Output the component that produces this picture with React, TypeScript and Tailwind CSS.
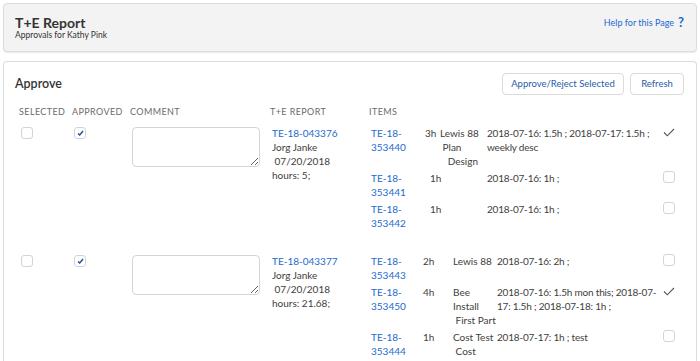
import React from 'react';

type Item = {
  id: string;
  hours: string;
  hoursPad?: boolean;
  desc: string[];
  detail: string;
  done: boolean;
};

type Cols = { id: string; hours: string; desc: string; detail: string };

type Report = {
  no: string;
  owner: string;
  date: string;
  total: string;
  cols: Cols;
  items: Item[];
};

const reports: Report[] = [
  {
    no: 'TE-18-043376',
    owner: 'Jorg Janke',
    date: '\u00a007/20/2018',
    total: 'hours: 5;',
    cols: { id: 'w-[54px]', hours: 'w-[15px]', desc: 'w-[47px]', detail: 'w-[176px]' },
    items: [
      {
        id: 'TE-18-353440',
        hours: '3h',
        desc: ['Lewis 88', '\u00a0Plan', '\u00a0\u00a0\u00a0Design'],
        detail: '2018-07-16: 1.5h ; 2018-07-17: 1.5h ; weekly desc',
        done: true,
      },
      { id: 'TE-18-353441', hours: '1h', hoursPad: true, desc: [], detail: '2018-07-16: 1h ;', done: false },
      { id: 'TE-18-353442', hours: '1h', hoursPad: true, desc: [], detail: '2018-07-16: 1h ;', done: false },
    ],
  },
  {
    no: 'TE-18-043377',
    owner: 'Jorg Janke',
    date: '\u00a007/20/2018',
    total: 'hours: 21.68;',
    cols: { id: 'w-[52px]', hours: 'w-[30px]', desc: 'w-[44px]', detail: 'w-[166px]' },
    items: [
      { id: 'TE-18-353443', hours: '2h', desc: ['Lewis 88'], detail: '2018-07-16: 2h ;', done: false },
      {
        id: 'TE-18-353450',
        hours: '4h',
        desc: ['Bee', 'Install', '\u00a0First Part'],
        detail: '2018-07-16: 1.5h mon this; 2018-07-17: 1.5h ; 2018-07-18: 1h ;',
        done: true,
      },
      {
        id: 'TE-18-353444',
        hours: '1h',
        desc: ['Cost Test', '\u00a0Cost', 'Update'],
        detail: '2018-07-17: 1h ; test',
        done: false,
      },
    ],
  },
];

const Box = ({ checked }: { checked?: boolean }) => (
  <span className="flex h-[12px] w-[12px] items-center justify-center rounded-[3px] border border-[#d4d4d4] bg-white">
    {checked && (
      <svg width="7" height="6" viewBox="0 0 7 6">
        <path d="M1 3.4 L2.7 5 L6 1" fill="none" stroke="#1f4ea6" strokeWidth="1.4" />
      </svg>
    )}
  </span>
);

const Tick = () => (
  <svg width="12" height="9" viewBox="0 0 12 9" className="mt-[2px]">
    <path d="M1 4.5 L4.3 7.8 L11 1" fill="none" stroke="#555" strokeWidth="1.1" />
  </svg>
);

const ItemRow = ({ item, cols }: { item: Item; cols: Cols }) => (
  <div className="flex items-start pb-[3px]">
    <div className={`${cols.id} shrink-0 pr-[6px] text-[#1b6ad1]`}>
      {item.id.slice(0, 6)}
      <br />
      {item.id.slice(6)}
    </div>
    <div className={`${cols.hours} shrink-0 ${item.hoursPad ? 'pl-[5px]' : ''}`}>{item.hours}</div>
    <div className={`${cols.desc} shrink-0 whitespace-nowrap`}>
      {item.desc.map((d) => (
        <div key={d}>{d}</div>
      ))}
    </div>
    <div className={`${cols.detail} shrink-0 tracking-[-0.2px]`}>{item.detail}</div>
    <div className="w-[16px] shrink-0">{item.done ? <Tick /> : <Box />}</div>
  </div>
);

export default function App() {
  return (
    <div className="min-h-screen bg-white p-[3px] font-['Lato',sans-serif] text-[#3e3e3c]">
      {/* page header */}
      <div className="flex h-[49px] items-start justify-between rounded-[4px] border border-[#dcdcdc] bg-[#f3f3f3] px-[11px] pt-[11px] shadow-[0_1px_1px_rgba(0,0,0,0.08)]">
        <div>
          <h1 className="text-[14px] font-bold leading-[16px] text-[#333]">T+E Report</h1>
          <p className="mt-[-1px] text-[8.5px] leading-[10px] text-[#333]">Approvals for Kathy Pink</p>
        </div>
        <a className="mr-[1px] flex items-center gap-[4px] pt-[1px] text-[9px] text-[#1b6ad1]">
          Help for this Page
          <span className="text-[13px] font-bold leading-[13px]">?</span>
        </a>
      </div>

      {/* approvals card */}
      <div className="mt-[9px] rounded-t-[4px] border border-b-0 border-[#dcdcdc] bg-white pt-[11px] text-[10px] leading-[14px]">
        <div className="flex h-[22px] items-center justify-between px-[11px]">
          <h2 className="text-[12.5px] font-semibold text-[#333]">Approve</h2>
          <div className="mr-[1px] flex gap-[6px]">
            <button className="h-[22px] w-[122px] rounded-[4px] border border-[#dddbda] bg-white text-[9.5px] text-[#2a5cab]">
              Approve/Reject Selected
            </button>
            <button className="h-[22px] w-[54px] rounded-[4px] border border-[#dddbda] bg-white text-[9.5px] text-[#2a5cab]">
              Refresh
            </button>
          </div>
        </div>

        <div className="mt-[10px] px-[15px]">
          <div className="flex text-[9px] uppercase tracking-[0.4px] text-[#6b6b6b]">
            <div className="w-[53px]">Selected</div>
            <div className="w-[58px]">Approved</div>
            <div className="w-[140px]">Comment</div>
            <div className="w-[99px]">T+E Report</div>
            <div>Items</div>
          </div>

          <div className="mt-[7px]">
            {reports.map((r) => (
              <div key={r.no} className="flex items-start pb-[21px]">
                <div className="w-[53px] pl-[2px] pt-[1px]">
                  <Box />
                </div>
                <div className="w-[58px] pl-[2px] pt-[1px]">
                  <Box checked />
                </div>
                <div className="w-[140px] pl-[2px] pt-[1px]">
                  <textarea className="block h-[40px] w-[128px] rounded-[4px] border border-[#d4d4d4] bg-white" />
                </div>
                <div className="w-[99px] pl-[2px]">
                  <div className="text-[#1b6ad1]">{r.no}</div>
                  <div>{r.owner}</div>
                  <div>{r.date}</div>
                  <div>{r.total}</div>
                </div>
                <div className="pl-[2px]">
                  {r.items.map((it) => (
                    <ItemRow key={it.id} item={it} cols={r.cols} />
                  ))}
                </div>
              </div>
            ))}
          </div>
        </div>
      </div>
    </div>
  );
}
